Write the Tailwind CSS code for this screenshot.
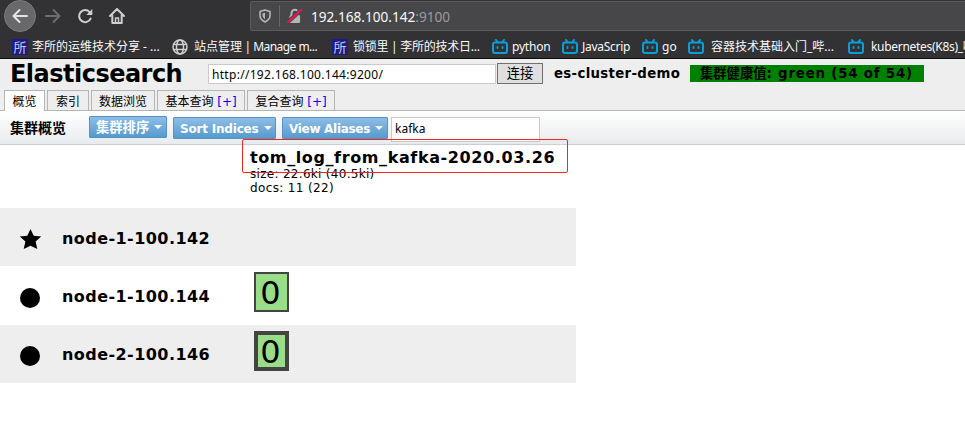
<!DOCTYPE html>
<html lang="zh-CN">
<head>
<meta charset="utf-8">
<title>Elasticsearch</title>
<script src="https://cdn.jsdelivr.net/npm/@tailwindcss/browser@4"></script>
</head>
<body class="w-[965px] h-[434px] overflow-hidden bg-white text-black font-['DejaVu_Sans','Noto_Sans_CJK_SC',sans-serif] whitespace-nowrap">
<svg class="hidden">
  <symbol id="tv" viewBox="0 0 16 15"><g fill="none" stroke="#0a9fd8" stroke-width="2" stroke-linecap="round" stroke-linejoin="round"><rect x="1" y="3.500" width="14" height="10.500" rx="2"/><path d="M4 1l1.500 2M12 1l-1.500 2"/><path d="M5.500 7.800v1.200M10.500 7.800v1.200" stroke-width="1.800"/></g></symbol>
</svg>

<!-- browser chrome -->
<div class="h-[59px] bg-[#323234] border-b border-[#0c0c0d] text-[#f9f9fa] font-['Noto_Sans','Noto_Sans_CJK_SC',sans-serif]">
  <div class="h-8 flex items-start">
    <div class="w-[250px] h-8 pl-1 flex items-center shrink-0">
      <div class="size-8 rounded-full bg-[#68686a] border border-[#7b7b7d] flex items-center justify-center">
        <svg class="size-4" viewBox="0 0 16 16" fill="none" stroke="#e4e4e5" stroke-width="2" stroke-linecap="round" stroke-linejoin="round"><path d="M15 8H1.5M7.5 2l-6 6 6 6"/></svg>
      </div>
      <svg class="size-4 ml-[9px]" viewBox="0 0 16 16" fill="none" stroke="#6e6e70" stroke-width="2" stroke-linecap="round" stroke-linejoin="round"><path d="M1 8h13.5M8.500 2l6 6-6 6"/></svg>
      <svg class="size-4 ml-4" viewBox="0 0 16 16" fill="none" stroke="#cfcfd0" stroke-width="2" stroke-linecap="round"><path d="M13.6 10.600A6 6 0 1 1 12.600 4.100"/><path d="M15.300 1v6H9.300z" fill="#cfcfd0" stroke="none"/></svg>
      <svg class="size-4 ml-4" viewBox="0 0 16 16" fill="none" stroke="#cfcfd0" stroke-width="2" stroke-linecap="round" stroke-linejoin="round"><path d="M1 8l7-7 7 7M3.300 7.500V15h9.400V7.500"/><path d="M6.500 15v-5h3v5" stroke-width="1.500"/></svg>
    </div>
    <div class="flex-1 h-[30px] mt-px bg-[#474749] border border-r-0 border-[#5a5a5c] rounded-l-[2px] flex items-center pl-[8px]">
      <svg class="w-3 h-[14px]" viewBox="0 0 12 14"><path d="M6 1l5 1.500v4c0 3-2 5-5 6.500-3-1.500-5-3.500-5-6.500v-4z" fill="none" stroke="#b5b5b7" stroke-width="1.600" stroke-linejoin="round"/><path d="M6 3.800v6.400C4.300 9 3.500 7.800 3.500 6V4.500z" fill="#b5b5b7"/></svg>
      <div class="w-px h-[22px] bg-[#68686a] ml-2"></div>
      <svg class="w-[15px] h-4 ml-[7px]" viewBox="0 0 15 16"><path d="M4.500 8V5a3.300 3.300 0 0 1 6.600 0v3" fill="none" stroke="#b5b5b7" stroke-width="2"/><rect x="2.500" y="7" width="10.600" height="8" rx="1.500" fill="#b5b5b7"/><path d="M1 14L14 2" stroke="#474749" stroke-width="4"/><path d="M1.200 14L14 2" stroke="#f0134d" stroke-width="2" stroke-linecap="round"/></svg>
      <div class="ml-[9px] mt-px text-[13.600px] leading-5">192.168.100.142<span class="text-[#9a9a9c]">:9100</span></div>
    </div>
  </div>
  <div class="h-[26px] pl-3 pt-[3px] flex items-center text-[12px] leading-5">
    <div class="w-40 flex items-center shrink-0"><span class="size-4 bg-[#1f1c86] text-[#c9c9e8] text-[13px] leading-4 text-center">所</span><span class="ml-1">李所的运维技术分享 - ...</span></div>
    <div class="w-40 flex items-center shrink-0"><svg class="size-4" viewBox="0 0 16 16" fill="none" stroke="#cfcfd0" stroke-width="1.500"><circle cx="8" cy="8" r="7"/><ellipse cx="8" cy="8" rx="3.500" ry="7"/><path d="M1.500 5.500h13M1.500 10.500h13"/></svg><span class="ml-[6px]">站点管理<span class="tracking-[-0.550px]"> | Manage m...</span></span></div>
    <div class="w-40 flex items-center shrink-0"><span class="size-4 bg-[#1f1c86] text-[#c9c9e8] text-[13px] leading-4 text-center">所</span><span class="ml-[5px] tracking-[-0.250px]">锁锁里 | 李所的技术日...</span></div>
    <div class="w-[70px] flex items-center shrink-0"><svg class="w-4 h-[15px]"><use href="#tv"/></svg><span class="ml-1 tracking-[-0.200px]">python</span></div>
    <div class="w-20 flex items-center shrink-0"><svg class="w-4 h-[15px]"><use href="#tv"/></svg><span class="ml-1 tracking-[-0.280px]">JavaScrip</span></div>
    <div class="w-[46px] flex items-center shrink-0"><svg class="w-4 h-[15px]"><use href="#tv"/></svg><span class="ml-1">go</span></div>
    <div class="w-40 flex items-center shrink-0"><svg class="w-4 h-[15px]"><use href="#tv"/></svg><span class="ml-[7px]">容器技术基础入门_哔...</span></div>
    <div class="w-[117px] overflow-hidden flex items-center shrink-0"><svg class="w-4 h-[15px] shrink-0"><use href="#tv"/></svg><span class="ml-[7px] tracking-[-0.300px]">kubernetes(K8s)_哔</span></div>
  </div>
</div>

<!-- application header -->
<div class="h-[52px] bg-[#eeeeee] border-b border-[#b5b5b5] flex flex-col justify-between">
  <div class="h-[30px] pl-[10px] flex items-start">
    <h1 class="w-[198px] shrink-0 font-bold text-[24px] leading-[30px] tracking-[-0.520px]">Elasticsearch</h1>
    <div class="w-[288px] h-5 mt-[5px] shrink-0 bg-white border border-[#c9c9c9] pl-[3px] text-[12px] leading-[19px] tracking-[0.300px] font-['Noto_Sans',sans-serif]">http://192.168.100.144:9200/</div>
    <div class="w-[46px] h-[21px] mt-1 ml-px shrink-0 bg-[#dfdfdf] border border-[#707070] text-center text-[13.300px] leading-[20px]">连接</div>
    <div class="w-[136px] ml-[11px] mt-1.5 shrink-0 font-bold text-[13.300px] leading-[18px] tracking-[0.330px]">es-cluster-demo</div>
    <div class="w-[234px] h-[17px] mt-1.5 shrink-0 bg-[#008000] pl-[10px] font-bold text-[13.300px] leading-[18px]">集群健康值<span class="tracking-[0.830px]">: green (54 of 54)</span></div>
  </div>
  <div class="flex items-end h-5 pl-1 gap-[2px] text-[12px] leading-[23px] text-center">
    <div class="w-[41px] h-[21px] relative top-px bg-white border border-b-0 border-[#b5b5b5]">概览</div>
    <div class="w-[42px] h-5 border border-b-0 border-[#b5b5b5]">索引</div>
    <div class="w-[64px] h-5 border border-b-0 border-[#b5b5b5]">数据浏览</div>
    <div class="w-[88px] h-5 border border-b-0 border-[#b5b5b5]">基本查询 <span class="text-[#0000ee]">[+]</span></div>
    <div class="w-[88px] h-5 border border-b-0 border-[#b5b5b5]">复合查询 <span class="text-[#0000ee]">[+]</span></div>
  </div>
</div>

<!-- toolbar -->
<div class="h-[34px] pl-[10px] flex items-start bg-linear-to-b from-white to-[#e8ebed] border-b border-[#cccfd1]">
  <div class="w-[79px] shrink-0 font-bold text-[14px] leading-[34px]">集群概览</div>
  <div class="flex text-white font-bold text-[12px] leading-5">
    <div class="w-[78px] h-[22px] mt-[5px] border border-[#5592cc] rounded-[1px] bg-linear-to-b from-[#8dbde6] to-[#569bce] pl-1.5 flex items-center"><span class="w-[58px] shrink-0 pt-px text-[13.300px]">集群排序</span><span class="border-x-4 border-x-transparent border-t-4 border-t-white"></span></div>
    <div class="w-[103px] h-[22px] mt-1.5 ml-1.5 border border-[#5592cc] rounded-[1px] bg-linear-to-b from-[#8dbde6] to-[#569bce] pl-1.5 flex items-center"><span class="w-[84px] shrink-0 pt-px tracking-[-0.200px]">Sort Indices</span><span class="border-x-4 border-x-transparent border-t-4 border-t-white"></span></div>
    <div class="w-[106px] h-[22px] mt-1.5 ml-1.5 border border-[#5592cc] rounded-[1px] bg-linear-to-b from-[#8dbde6] to-[#569bce] pl-1.5 flex items-center"><span class="w-[86px] shrink-0 pt-px tracking-[-0.300px]">View Aliases</span><span class="border-x-4 border-x-transparent border-t-4 border-t-white"></span></div>
  </div>
  <div class="w-[149px] h-[25px] mt-1.5 ml-[3px] bg-white border border-[#c9c9c9] pl-[3px] text-[12px] leading-[22px] font-['Noto_Sans',sans-serif]">kafka</div>
</div>

<!-- index and nodes -->
<div class="w-[576px]">
  <div class="h-[63px] pl-[250px] pt-[2px] relative">
    <div class="absolute left-[242px] top-[-6px] w-[326px] h-[34px] border border-[#f0281e] rounded-[2px]"></div>
    <div class="font-bold text-[16px] leading-[21px] tracking-[0.610px] h-5">tom_log_from_kafka-2020.03.26</div>
    <div class="text-[12px] leading-[14px] tracking-[0.300px]">size: 22.6ki (40.5ki)</div>
    <div class="text-[12px] leading-[14px] tracking-[0.360px]">docs: 11 (22)</div>
  </div>
  <div class="h-[58px] bg-[#eeeeee] flex items-center pl-[19px] font-bold text-[16px] tracking-[0.440px]">
    <svg class="w-[23px] h-[22px] mt-1" viewBox="0 0 23 22"><path d="M11.500 1l3.200 6.700 7.500.8-5.600 5 1.700 7.500-6.800-3.200L4.700 21l1.700-7.500-5.600-5 7.500-.8z"/></svg>
    <div class="ml-[20px] mt-[3px]">node-1-100.142</div>
  </div>
  <div class="h-[59px] flex items-center pl-5 font-bold text-[16px] tracking-[0.440px]">
    <div class="size-5 rounded-full bg-black mt-[4px]"></div>
    <div class="w-[192px] ml-[22px] mt-[2px]">node-1-100.144</div>
    <div class="w-[35px] h-10 mb-[7px] bg-[#99dd88] border-2 border-[#444444] text-center font-normal text-[32px] leading-[38px] tracking-normal"><span class="relative left-[-1px]">0</span></div>
  </div>
  <div class="h-[58px] bg-[#eeeeee] flex items-center pl-5 font-bold text-[16px] tracking-[0.440px]">
    <div class="size-5 rounded-full bg-black mt-[3px]"></div>
    <div class="w-[192px] ml-[22px] mt-[2px]">node-2-100.146</div>
    <div class="w-[35px] h-10 mb-[6px] bg-[#99dd88] border-4 border-[#444444] text-center font-normal text-[32px] leading-[34px] tracking-normal"><span class="relative left-[-1px]">0</span></div>
  </div>
</div>
</body>
</html>
